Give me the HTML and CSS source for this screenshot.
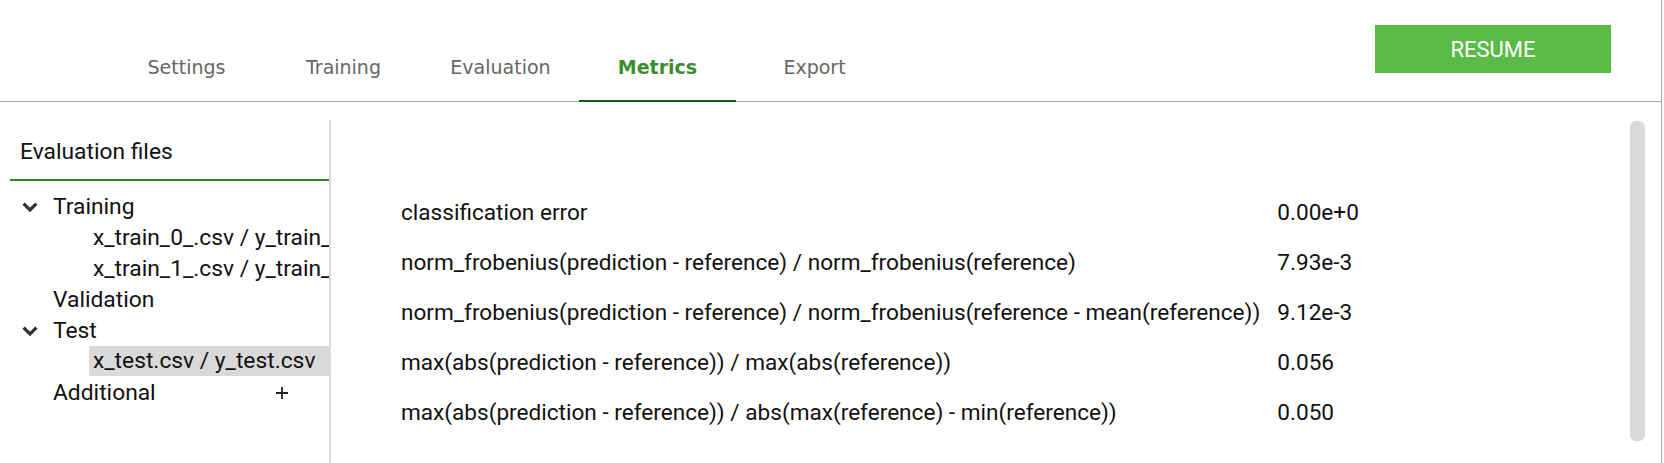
FILE: index.html
```html
<!DOCTYPE html>
<html>
<head>
<meta charset="utf-8">
<link rel="stylesheet" href="styles.css">
</head>
<body>
<div class="app">
  <header class="header">
    <nav class="tabs">
      <div class="tab">Settings</div>
      <div class="tab">Training</div>
      <div class="tab">Evaluation</div>
      <div class="tab active">Metrics</div>
      <div class="tab">Export</div>
    </nav>
    <button class="resume">RESUME</button>
  </header>
  <div class="body">
    <aside class="sidebar">
      <div class="side-title">Evaluation files</div>
      <div class="tree">
        <div class="row">
          <svg class="chev" viewBox="0 0 16 10"><path d="M1.6 1.6L8 8L14.4 1.6"/></svg>
          <span class="label">Training</span>
        </div>
        <div class="child">x_train_0_.csv / y_train_0_.csv</div>
        <div class="child">x_train_1_.csv / y_train_1_.csv</div>
        <div class="row plain"><span class="label">Validation</span></div>
        <div class="row">
          <svg class="chev" viewBox="0 0 16 10"><path d="M1.6 1.6L8 8L14.4 1.6"/></svg>
          <span class="label">Test</span>
        </div>
        <div class="child selected">x_test.csv / y_test.csv</div>
        <div class="row plain add">
          <span class="label">Additional</span>
          <svg class="plus" viewBox="0 0 12 12"><path d="M6 0v12M0 6h12"/></svg>
        </div>
      </div>
    </aside>
    <main class="main">
      <div class="metrics">
        <div class="m-label">classification error</div><div class="m-value">0.00e+0</div>
        <div class="m-label">norm_frobenius(prediction - reference) / norm_frobenius(reference)</div><div class="m-value">7.93e-3</div>
        <div class="m-label">norm_frobenius(prediction - reference) / norm_frobenius(reference - mean(reference))</div><div class="m-value">9.12e-3</div>
        <div class="m-label">max(abs(prediction - reference)) / max(abs(reference))</div><div class="m-value">0.056</div>
        <div class="m-label">max(abs(prediction - reference)) / abs(max(reference) - min(reference))</div><div class="m-value">0.050</div>
      </div>
      <div class="scrollbar"></div>
    </main>
  </div>
</div>
</body>
</html>
```
FILE: styles.css
```css
html, body {
  margin: 0;
  padding: 0;
  background: #fff;
}
body {
  font-family: Roboto, "Liberation Sans", sans-serif;
  color: #111;
}
.app {
  width: 1662px;
  height: 463px;
  box-sizing: border-box;
  border-right: 1px solid #aaaaaa;
  overflow: hidden;
}
.header {
  height: 101px;
  border-bottom: 1px solid #aaaaaa;
  display: flex;
  align-items: flex-start;
}
.tabs {
  display: flex;
  padding-left: 108px;
}
.tab {
  width: 157px;
  text-align: center;
  font-family: "DejaVu Sans", Verdana, sans-serif;
  font-size: 19px;
  line-height: 24px;
  color: #666;
  padding-top: 55px;
  padding-bottom: 21px;
  border-bottom: 2px solid transparent;
}
.tab.active {
  color: #3b8e2c;
  font-weight: bold;
  border-bottom-color: #0c5e14;
}
.resume {
  margin-left: auto;
  margin-right: 50px;
  margin-top: 25px;
  width: 236px;
  height: 48px;
  border: none;
  background: #5abb46;
  color: #fff;
  font-family: Roboto, sans-serif;
  font-size: 22px;
  padding: 0;
}
.body {
  display: flex;
  padding-top: 18px;
  height: 343px;
}
.sidebar {
  width: 331px;
  box-sizing: border-box;
  padding-left: 10px;
  border-right: 2px solid #dadada;
  font-size: 22.8px;
}
.side-title {
  padding: 19px 0 14px 10px;
  line-height: 26px;
  border-bottom: 2px solid #2a8a2a;
}
.tree {
  padding-top: 10px;
}
.row {
  display: flex;
  align-items: center;
  height: 31px;
}
.chev {
  width: 16px;
  height: 10px;
  margin-left: 12px;
  margin-right: 8px;
  margin-top: 1px;
  fill: none;
  stroke: #333;
  stroke-width: 3.2;
  flex: none;
}
.label {
  margin-left: 7px;
}
.row.plain {
  padding-left: 43px;
}
.row.plain .label {
  margin-left: 0;
}
.row.add {
  justify-content: space-between;
  padding-right: 41px;
}
.plus {
  width: 12px;
  height: 12px;
  stroke: #222;
  stroke-width: 1.8;
  fill: none;
}
.child {
  margin-left: 79px;
  padding-left: 4px;
  height: 31px;
  line-height: 31px;
  white-space: nowrap;
  overflow: hidden;
}
.child.selected {
  background: #d9d9d9;
  height: 30px;
  line-height: 30px;
  margin-bottom: 1px;
}
.main {
  flex: 1;
  display: flex;
  padding-left: 70px;
  padding-right: 16px;
}
.metrics {
  flex: 1;
  display: grid;
  grid-template-columns: max-content max-content;
  column-gap: 17px;
  grid-auto-rows: 50px;
  align-items: center;
  align-content: start;
  padding-top: 67px;
  font-size: 22.6px;
}
.scrollbar {
  width: 15px;
  height: 320px;
  margin-top: 1px;
  background: #dadada;
  border-radius: 6px;
}
```
